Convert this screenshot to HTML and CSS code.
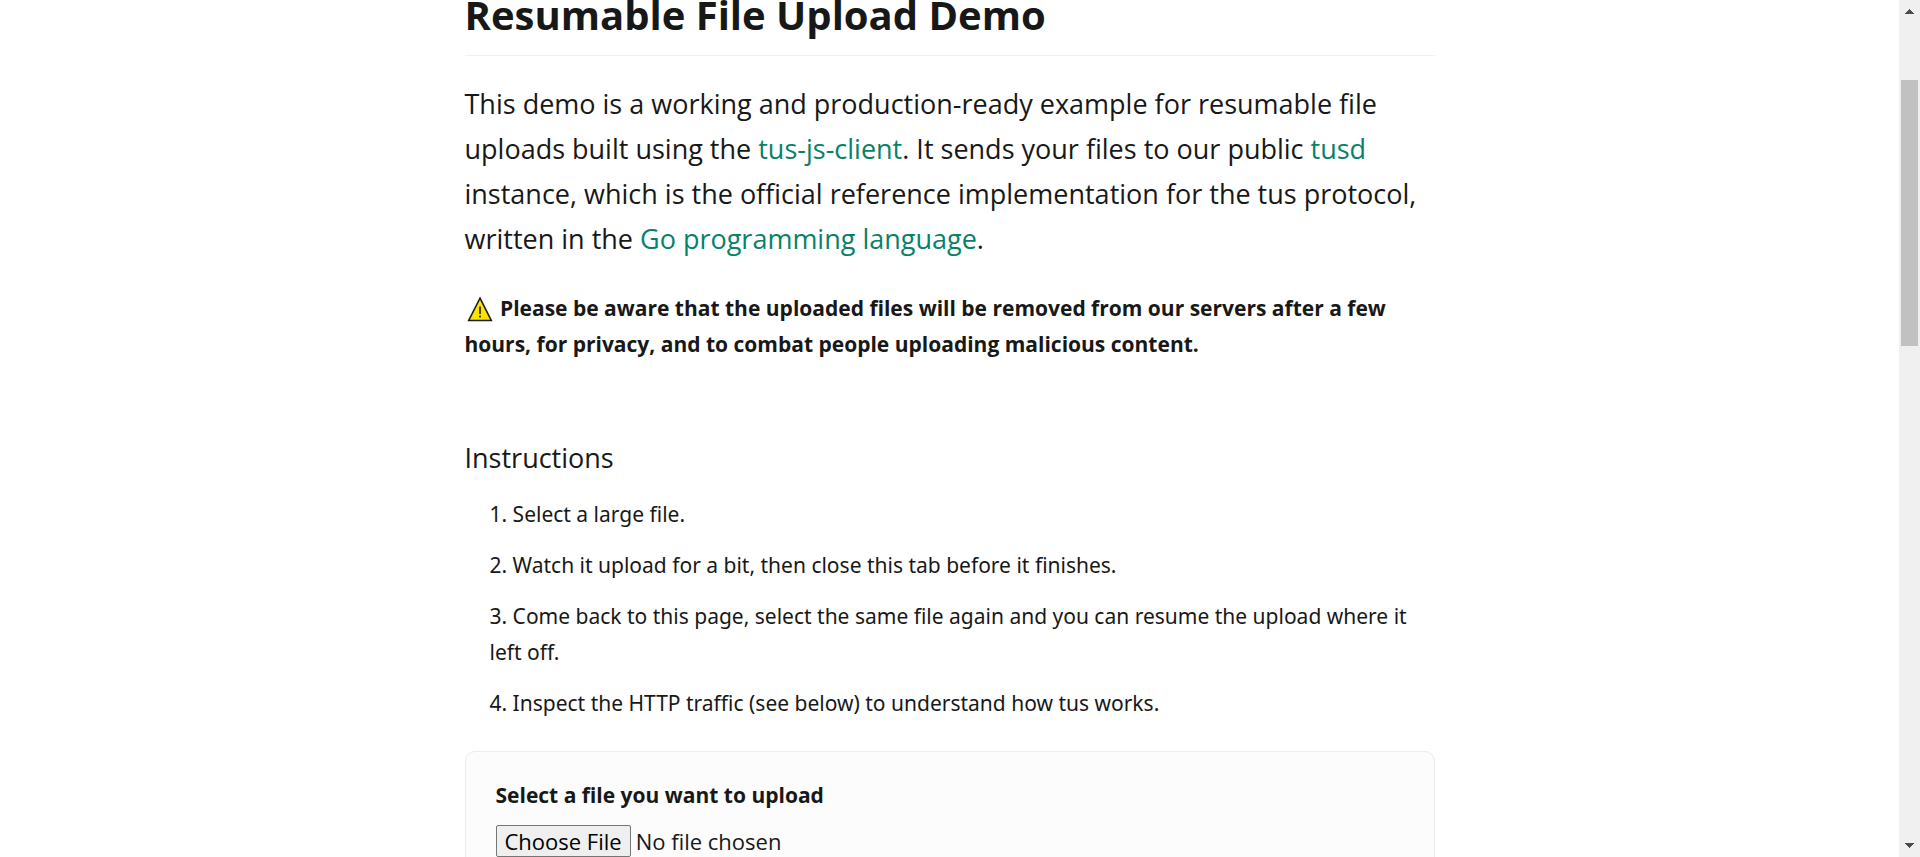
FILE: index.html
```html
<!DOCTYPE html>
<html lang="en">
<head>
<meta charset="utf-8">
<meta name="viewport" content="width=device-width, initial-scale=1">
<title>Resumable File Upload Demo</title>
<link rel="stylesheet" href="styles.css">
</head>
<body>
<div class="viewport">
  <div class="page">
    <main class="content">
      <h1 class="title">Resumable File Upload Demo</h1>
      <p class="lead">This demo is a working and production-ready example for resumable file uploads built using the <a href="#tus-js-client">tus-js-client</a>. It sends your files to our public <a href="#tusd">tusd</a> instance, which is the official reference implementation for the tus protocol, written in the <a href="#go">Go programming language</a>.</p>
      <p class="notice"><svg class="notice-icon" viewBox="0 0 30 26" role="img" aria-label="Warning"><path d="M15 2.2 26.3 24.5H3.7Z" fill="#fde300" stroke="#1b1b1b" stroke-width="1.6"/><path d="M15 10.5v7.5M15 19.5v2" stroke="#1b1b1b" stroke-width="1.6"/></svg> Please be aware that the uploaded files will be removed from our servers after a few hours, for privacy, and to combat people uploading malicious content.</p>
      <h2 class="subtitle">Instructions</h2>
      <ol class="steps">
        <li>Select a large file.</li>
        <li>Watch it upload for a bit, then close this tab before it finishes.</li>
        <li>Come back to this page, select the same file again and you can resume the upload where it left off.</li>
        <li>Inspect the HTTP traffic (see below) to understand how tus works.</li>
      </ol>
      <form class="card">
        <label class="card-label" for="file">Select a file you want to upload</label>
        <input class="file" id="file" type="file">
      </form>
    </main>
  </div>
  <div class="scrollbar" aria-hidden="true">
    <svg class="arrow" viewBox="0 0 9 5" shape-rendering="crispEdges"><path d="M4 0h1v1h1v1h1v1h1v1h1v1H0V4h1V3h1V2h1V1h1Z"/></svg>
    <div class="track"><div class="thumb"></div></div>
    <svg class="arrow" viewBox="0 0 9 5" shape-rendering="crispEdges"><path d="M0 0h9v1H8v1H7v1H6v1H5v1H4V4H3V3H2V2H1V1H0Z"/></svg>
  </div>
</div>
</body>
</html>
```
FILE: styles.css
```css
* {
  box-sizing: border-box;
}

body {
  margin: 0;
  background: #fff;
  color: #181818;
  font: 400 21px/36px "Open Sans", "Noto Sans", sans-serif;
}

.viewport {
  display: flex;
  height: 100vh;
  overflow: hidden;
}

.page {
  flex: 1;
  min-width: 0;
  overflow: hidden;
}

/* The page is scrolled so that the heading is partly out of view. */
.content {
  max-width: 970px;
  margin: -10px auto 0;
}

.title {
  margin: 0;
  padding-bottom: 15px;
  border-bottom: 1px solid #f0f0f0;
  font-size: 40px;
  font-weight: 700;
  line-height: 50px;
}

.lead {
  margin: 25px 0 0;
  font-size: 27px;
  line-height: 45px;
}

.lead a {
  color: #07826a;
  text-decoration: none;
}

.notice {
  margin: 29px 0 0;
  font-weight: 700;
}

.notice-icon {
  width: 30px;
  height: 26px;
  vertical-align: -6px;
}

.subtitle {
  margin: 78px 0 0;
  font-size: 27px;
  font-weight: 400;
}

.steps {
  display: grid;
  gap: 15px;
  margin: 20px 0 30px;
  padding-left: 25px;
  font-family: "Noto Sans", "Open Sans", sans-serif;
  list-style-position: inside;
}

.card {
  display: grid;
  align-content: start;
  gap: 12px;
  min-height: 160px;
  padding: 25px 30px;
  border: 1px solid #ececec;
  border-radius: 10px;
  background: #fcfcfc;
}

.card-label {
  font-weight: 700;
}

.file {
  color: inherit;
  font: inherit;
  font-size: 22px;
  line-height: 30px;
}

.file::file-selector-button {
  height: 32px;
  margin-right: 5px;
  padding: 0 8px;
  border: 1px solid #767676;
  border-radius: 2px;
  background: #efefef;
  color: #000;
  font: inherit;
}

.scrollbar {
  display: flex;
  flex-direction: column;
  align-items: center;
  width: 21px;
  padding: 9px 2px;
  background: #f0f0f0;
}

.arrow {
  flex: none;
  width: 9px;
  height: 5px;
  fill: #4d4d4d;
}

.track {
  display: grid;
  flex: 1;
  align-self: stretch;
  grid-template-rows: 8fr 32fr 60fr;
}

.thumb {
  grid-row: 2;
  background: #c1c1c1;
}
```
